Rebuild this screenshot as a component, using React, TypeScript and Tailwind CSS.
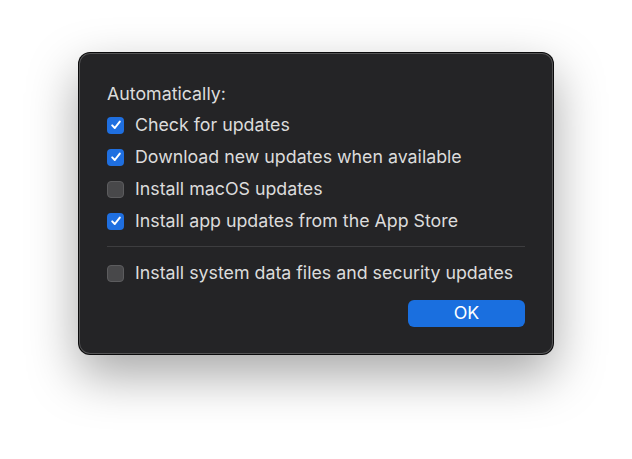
import React from 'react';

const items = [
  { label: 'Check for updates', checked: true },
  { label: 'Download new updates when available', checked: true },
  { label: 'Install macOS updates', checked: false },
  { label: 'Install app updates from the App Store', checked: true },
];

const Checkbox: React.FC<{ checked: boolean }> = ({ checked }) =>
  checked ? (
    <div className="w-[17px] h-[17px] rounded-[4px] bg-[#1f6fe0] flex items-center justify-center shrink-0">
      <svg width="12" height="12" viewBox="0 0 12 12" fill="none">
        <path d="M2.2 6.4 L4.8 9 L9.8 2.6" stroke="white" strokeWidth="2" strokeLinecap="round" strokeLinejoin="round" />
      </svg>
    </div>
  ) : (
    <div className="w-[17px] h-[17px] rounded-[4px] bg-[#48484a] border border-[#5c5c5e] shrink-0" />
  );

const Row: React.FC<{ label: string; checked: boolean }> = ({ label, checked }) => (
  <div className="h-[32px] flex items-center gap-[11px]">
    <Checkbox checked={checked} />
    <span>{label}</span>
  </div>
);

export default function App() {
  return (
    <div className="w-[632px] h-[459px] bg-white flex justify-center pt-[52px]">
      <div
        className="w-[476px] h-[303px] rounded-[12px] bg-[#242426] border border-black/70 shadow-[inset_0_0_0_1px_rgba(255,255,255,0.22),0_20px_50px_rgba(0,0,0,0.35)] pl-[28px] pr-[28px] pt-[26px] text-[17.8px] text-[#dcdcdc] flex flex-col"
        style={{ fontFamily: 'Inter, "Liberation Sans", sans-serif' }}
      >
        <div className="h-[30px] flex items-center">Automatically:</div>
        <div className="flex flex-col">
          {items.map((it) => (
            <Row key={it.label} {...it} />
          ))}
        </div>
        <div className="mt-[9px] mb-[10px] h-px bg-[#3d3d3f]" />
        <Row label="Install system data files and security updates" checked={false} />
        <div className="flex justify-end mt-[11px]">
          <button className="w-[117px] h-[27px] rounded-[6px] bg-[#1a6fdf] text-white text-[17.8px] flex items-center justify-center">
            OK
          </button>
        </div>
      </div>
    </div>
  );
}
